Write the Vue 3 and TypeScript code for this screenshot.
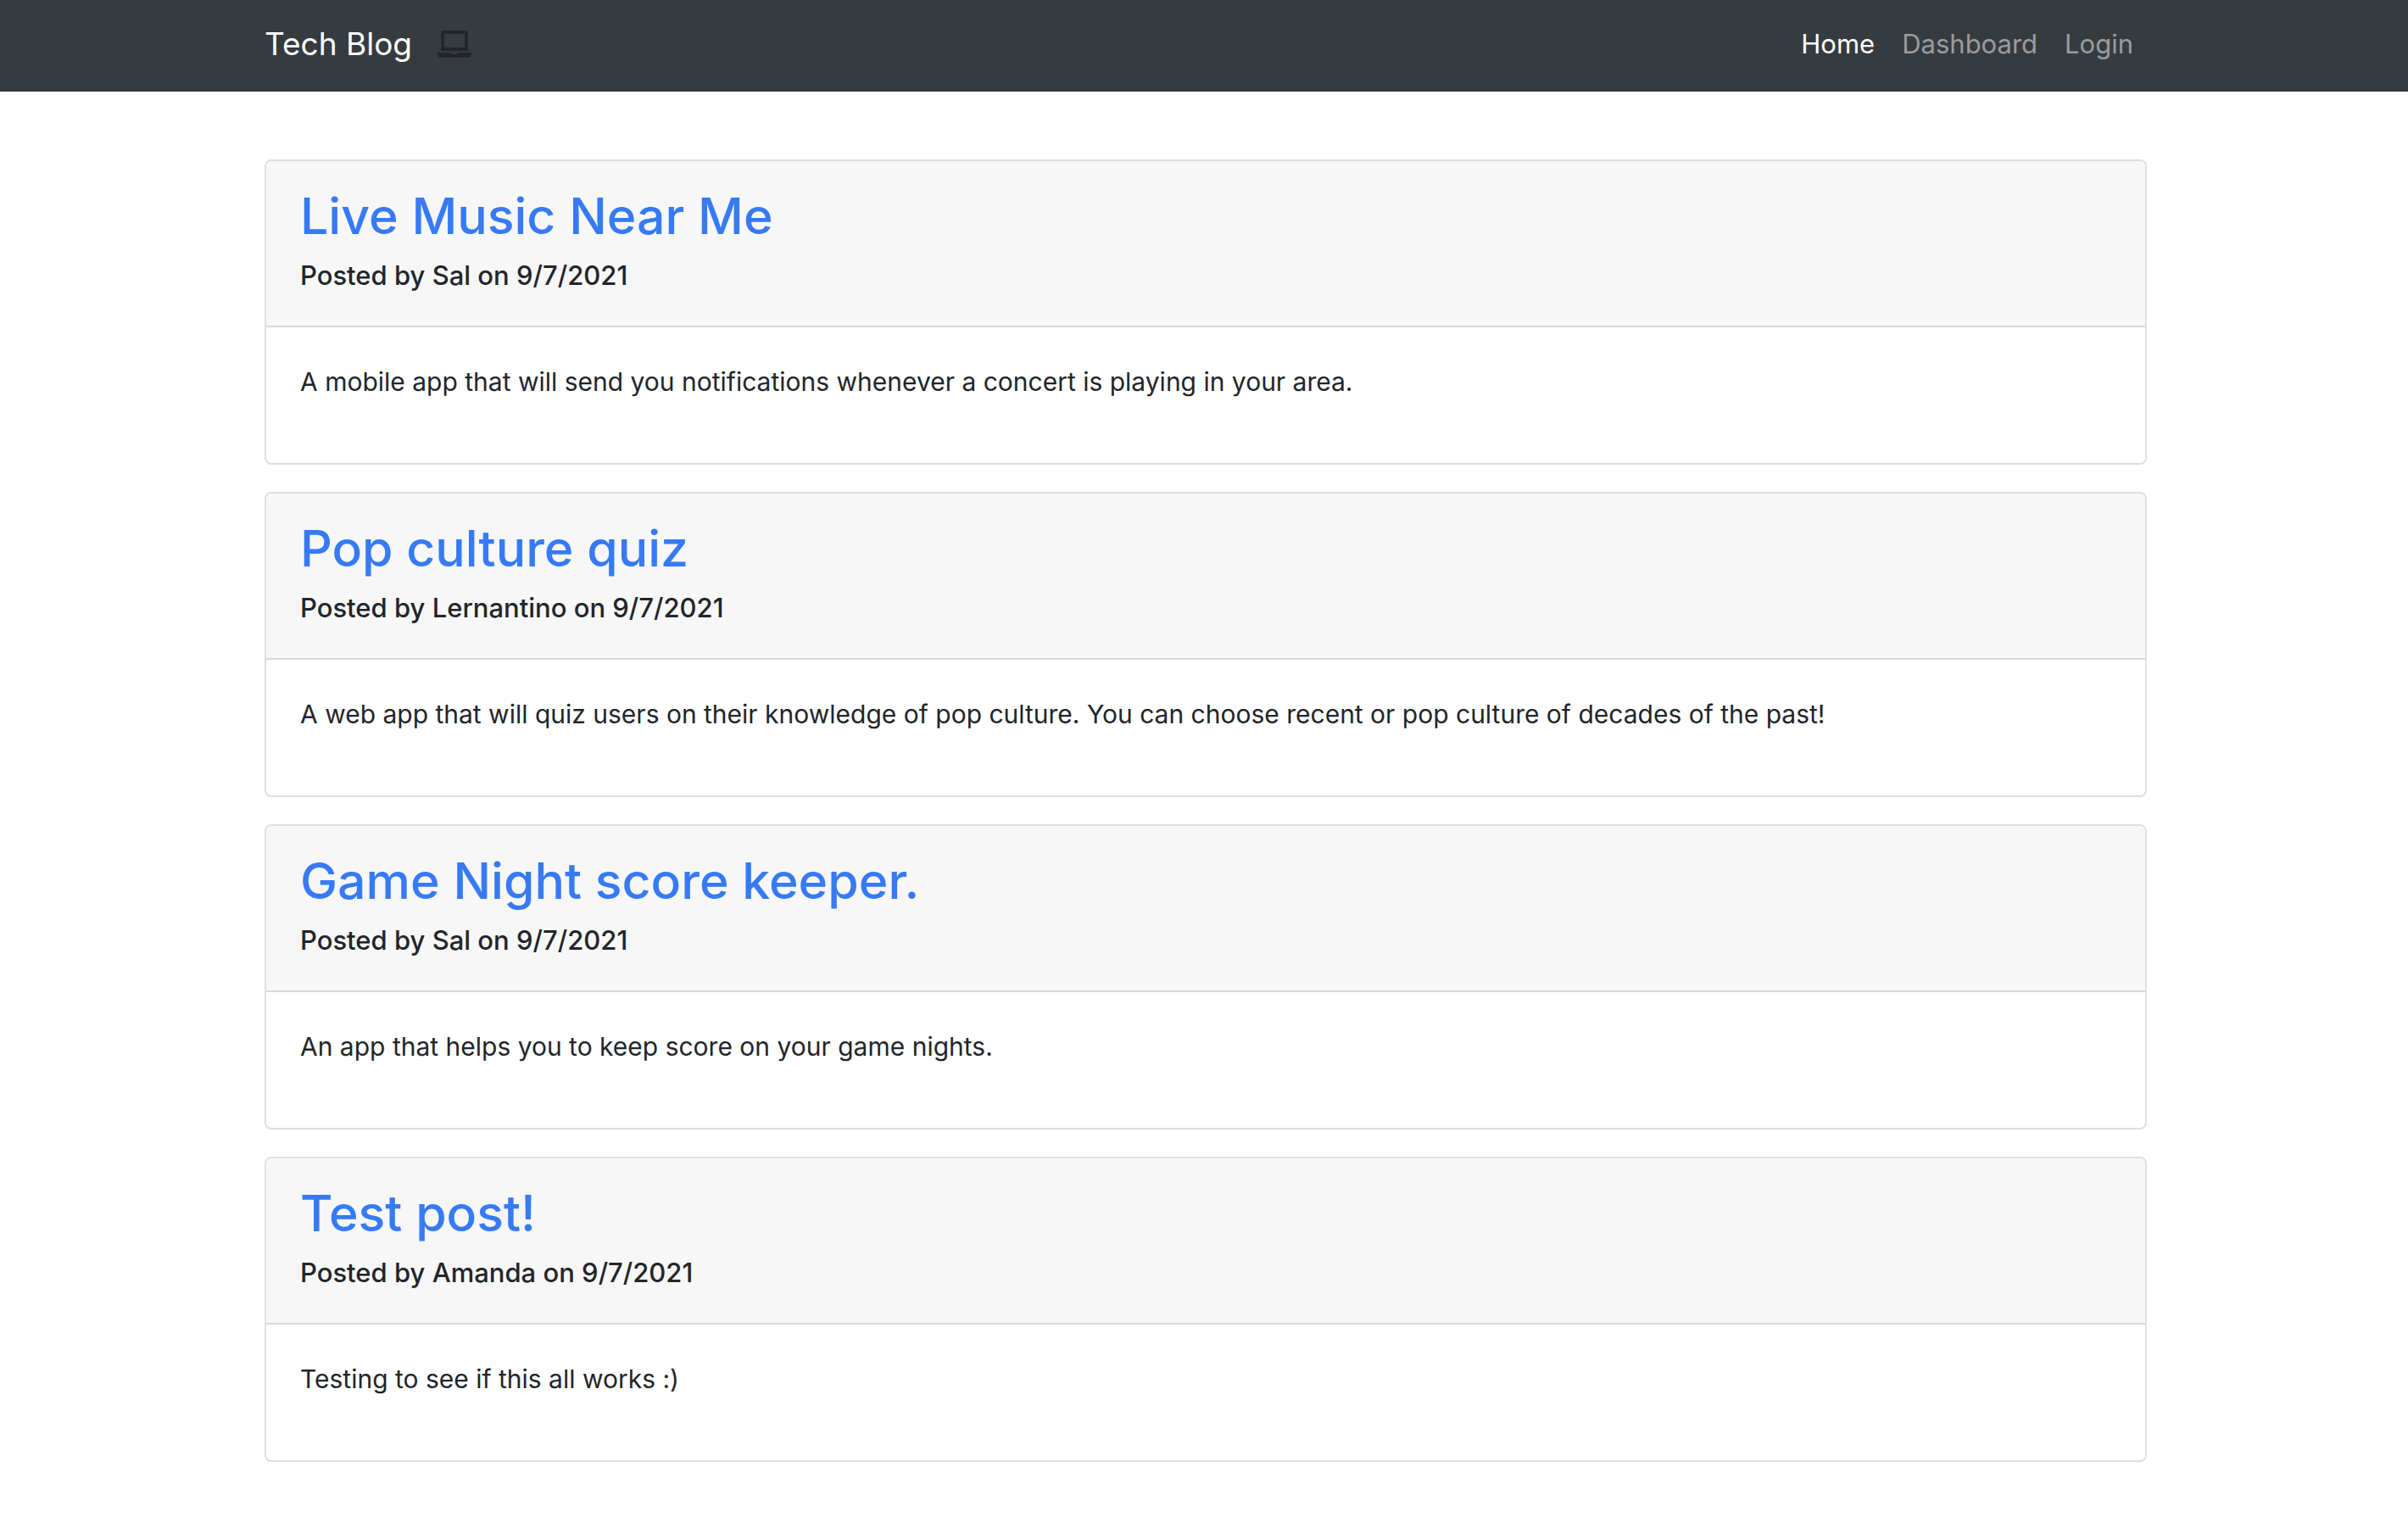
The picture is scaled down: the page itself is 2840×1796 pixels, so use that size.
<script setup lang="ts">
import { ref } from 'vue'

interface Post {
  id: number
  title: string
  author: string
  date: string
  text: string
}

const links: string[] = ['Home', 'Dashboard', 'Login']
const active = ref('Home')

const posts: Post[] = [
  {
    id: 1,
    title: 'Live Music Near Me',
    author: 'Sal',
    date: '9/7/2021',
    text: 'A mobile app that will send you notifications whenever a concert is playing in your area.',
  },
  {
    id: 2,
    title: 'Pop culture quiz',
    author: 'Lernantino',
    date: '9/7/2021',
    text: 'A web app that will quiz users on their knowledge of pop culture. You can choose recent or pop culture of decades of the past!',
  },
  {
    id: 3,
    title: 'Game Night score keeper.',
    author: 'Sal',
    date: '9/7/2021',
    text: 'An app that helps you to keep score on your game nights.',
  },
  {
    id: 4,
    title: 'Test post!',
    author: 'Amanda',
    date: '9/7/2021',
    text: 'Testing to see if this all works :)',
  },
]
</script>

<template>
  <div class="page">
    <header class="navbar">
      <div class="container bar">
        <a class="brand" href="#">Tech Blog</a>
        <svg class="laptop" viewBox="0 0 640 512" aria-hidden="true">
          <path
            d="M624 416H381.54c-.74 19.81-14.71 32-32.74 32H288c-18.69 0-33.02-17.47-32.77-32H16c-8.8 0-16 7.2-16 16v16c0 35.2 28.8 64 64 64h512c35.2 0 64-28.8 64-64v-16c0-8.8-7.2-16-16-16zM576 48c0-26.4-21.6-48-48-48H112C85.6 0 64 21.6 64 48v336h512V48zm-64 272H128V64h384v256z"
          />
        </svg>
        <nav class="links">
          <a
            v-for="link in links"
            :key="link"
            href="#"
            class="link"
            :class="{ active: link === active }"
            @click.prevent="active = link"
            >{{ link }}</a
          >
        </nav>
      </div>
    </header>
    <main class="container posts">
      <article v-for="post in posts" :key="post.id" class="card">
        <div class="card-header">
          <h2 class="title"><a href="#">{{ post.title }}</a></h2>
          <h6 class="meta">Posted by {{ post.author }} on {{ post.date }}</h6>
        </div>
        <div class="card-body">
          <p class="text">{{ post.text }}</p>
        </div>
      </article>
    </main>
  </div>
</template>

<style>
body {
  margin: 0;
  background: #fff;
}
</style>

<style scoped>
.page {
  font-family: Inter, 'Liberation Sans', sans-serif;
  font-size: 31px;
  line-height: 48px;
  color: #222529;
}

.container {
  box-sizing: border-box;
  width: 100%;
  max-width: 2284px;
  margin: 0 auto;
  padding: 0 30px 0 34px;
}

.navbar {
  background: #363b3f;
}

.bar {
  display: flex;
  align-items: center;
  min-height: 108px;
}

.brand {
  margin-right: 30px;
  padding-bottom: 4px;
  font-size: 37px;
  line-height: 60px;
  color: #fff;
  text-decoration: none;
}

.laptop {
  width: 40px;
  height: 32px;
  margin-bottom: 4px;
  fill: #222529;
}

.links {
  display: flex;
  margin-left: auto;
}

.link {
  padding: 14px 16px 18px;
  color: #999c9e;
  text-decoration: none;
}

.link.active {
  color: #fff;
}

.posts {
  display: flex;
  flex-direction: column;
  gap: 32px;
  padding-top: 80px;
  padding-bottom: 72px;
}

.card {
  overflow: hidden;
  border: 2px solid #dfdfdf;
  border-radius: 8px;
}

.card-header {
  padding: 24px 40px;
  background: #f7f7f7;
  border-bottom: 2px solid #d8d8d8;
}

.title {
  margin: 0 0 10px;
  font-size: 59px;
  font-weight: 500;
  line-height: 82px;
}

.title a {
  color: #367af6;
  text-decoration: none;
}

.meta {
  margin: 0 0 16px;
  font-size: 31px;
  font-weight: 500;
  line-height: 38px;
}

.card-body {
  padding: 40px;
}

.text {
  margin: 0 0 32px;
  font-size: 30px;
}
</style>
